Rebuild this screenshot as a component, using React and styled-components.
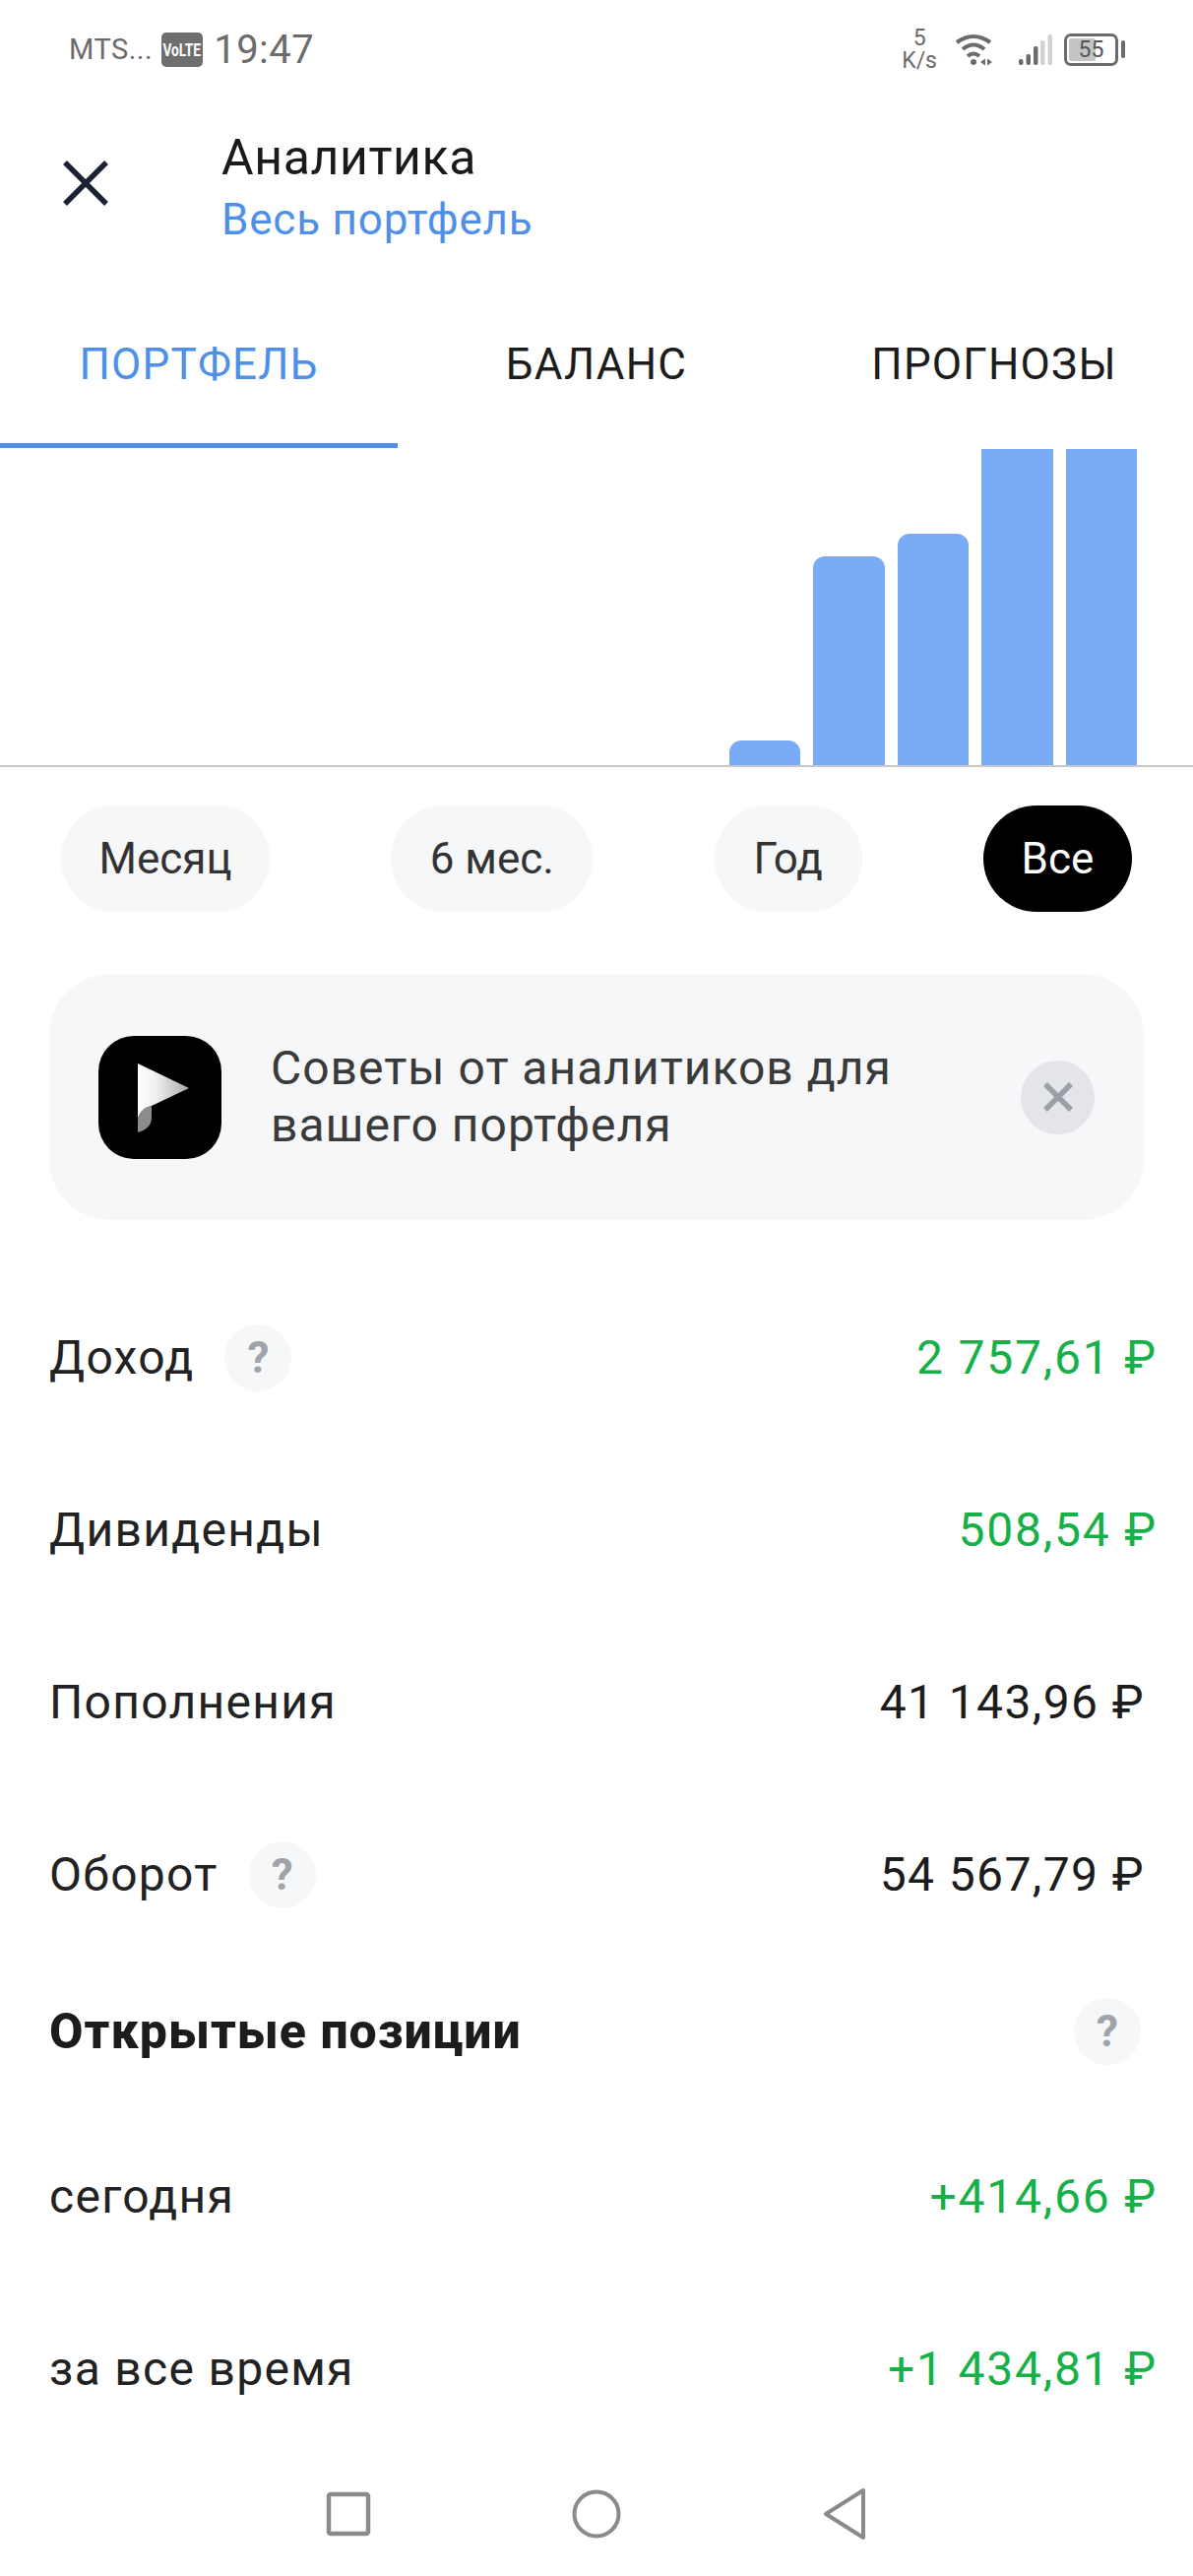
import React from 'react';
import styled, { createGlobalStyle } from 'styled-components';

const PERIODS = [
  { label: 'Месяц', width: 212 },
  { label: '6 мес.', width: 205 },
  { label: 'Год', width: 150 },
  { label: 'Все', width: 151, active: true },
];

const BARS = [25, 212, 235, 321, 321];

const App = () => (
  <Page>
    <GlobalStyle />
    <StatusBar>
      <StatusLeft>
        <Carrier>MTS...</Carrier>
        <Volte>
          <VolteText>VoLTE</VolteText>
        </Volte>
        <Clock>19:47</Clock>
      </StatusLeft>
      <StatusRight>
        <Speed>
          <span>5</span>
          <span>K/s</span>
        </Speed>
        <WifiIcon />
        <SignalIcon />
        <Battery>
          <BatteryBody>
            <BatteryFill />
            <BatteryText>55</BatteryText>
          </BatteryBody>
          <BatteryCap />
        </Battery>
      </StatusRight>
    </StatusBar>

    <Header>
      <CloseButton>
        <svg width="48" height="48" viewBox="0 0 48 48">
          <path d="M3 3 L45 45 M45 3 L3 45" stroke="#1b2233" strokeWidth="5.5" fill="none" />
        </svg>
      </CloseButton>
      <HeaderText>
        <Title>Аналитика</Title>
        <Subtitle>Весь портфель</Subtitle>
      </HeaderText>
    </Header>

    <Tabs>
      <Tab $active>ПОРТФЕЛЬ</Tab>
      <Tab>БАЛАНС</Tab>
      <Tab>ПРОГНОЗЫ</Tab>
    </Tabs>

    <Chart>
      {BARS.map((height, i) => (
        <Bar key={i} style={{ height }} $flat={height === 321} />
      ))}
    </Chart>

    <Periods>
      {PERIODS.map((p) => (
        <Period key={p.label} $active={p.active} style={{ width: p.width }}>
          {p.label}
        </Period>
      ))}
    </Periods>

    <Banner>
      <BannerIcon>
        <svg width="125" height="125" viewBox="0 0 125 125">
          <defs>
            <linearGradient id="flag" x1="0" x2="1" y1="0" y2="0">
              <stop offset="0" stopColor="#ffffff" />
              <stop offset="0.35" stopColor="#f0f0f0" />
              <stop offset="1" stopColor="#a9a9a9" />
            </linearGradient>
          </defs>
          <path d="M40 28 L92 53 L54 71 C45 73 40 80 40 86 Z" fill="url(#flag)" />
          <path d="M40 98 L40 86 C40 80 45 73 54 71 L54 83 C54 91 48 96 40 98 Z" fill="#8c8c8c" />
        </svg>
      </BannerIcon>
      <BannerText>Советы от аналитиков для вашего портфеля</BannerText>
      <BannerClose>
        <svg width="32" height="32" viewBox="0 0 32 32">
          <path d="M3 3 L29 29 M29 3 L3 29" stroke="#9aa0a8" strokeWidth="5.5" fill="none" />
        </svg>
      </BannerClose>
    </Banner>

    <Stats>
      <Row>
        <Label>
          Доход <Hint>?</Hint>
        </Label>
        <Value $positive>2 757,61 ₽</Value>
      </Row>
      <Row>
        <Label>Дивиденды</Label>
        <Value $positive>508,54 ₽</Value>
      </Row>
      <Row>
        <Label>Пополнения</Label>
        <Value>41 143,96 ₽</Value>
      </Row>
      <Row>
        <Label>
          Оборот <Hint>?</Hint>
        </Label>
        <Value>54 567,79 ₽</Value>
      </Row>
      <SectionRow>
        <SectionTitle>Открытые позиции</SectionTitle>
        <Hint>?</Hint>
      </SectionRow>
      <Row>
        <Label>сегодня</Label>
        <Value $positive>+414,66 ₽</Value>
      </Row>
      <Row>
        <Label>за все время</Label>
        <Value $positive>+1 434,81 ₽</Value>
      </Row>
    </Stats>

    <NavBar>
      <svg width="46" height="46" viewBox="0 0 46 46">
        <rect x="3" y="3" width="40" height="40" rx="2" fill="none" stroke="#8a8a8a" strokeWidth="4.5" />
      </svg>
      <svg width="50" height="50" viewBox="0 0 50 50">
        <circle cx="25" cy="25" r="22.5" fill="none" stroke="#8a8a8a" strokeWidth="4" />
      </svg>
      <svg width="46" height="54" viewBox="0 0 46 54">
        <path d="M42 3 L42 51 L4 27 Z" fill="none" stroke="#8a8a8a" strokeWidth="4" strokeLinejoin="round" />
      </svg>
    </NavBar>
  </Page>
);

const WifiIcon = () => (
  <Wifi width="40" height="33" viewBox="0 0 40 33">
    <path d="M2 9 Q19 -3 36 9" stroke="#6b6b6b" strokeWidth="4" fill="none" />
    <path d="M8 16 Q19 7 30 16" stroke="#6b6b6b" strokeWidth="4" fill="none" />
    <path d="M13 23 Q19 18 25 23" stroke="#6b6b6b" strokeWidth="4" fill="none" />
    <circle cx="19" cy="29" r="3" fill="#6b6b6b" />
    <path d="M26 29 L31 25.5 L31 32.5 Z M33 25.5 L38 29 L33 32.5 Z" fill="#6b6b6b" />
  </Wifi>
);

const SignalIcon = () => (
  <svg width="34" height="33" viewBox="0 0 34 33">
    <rect x="0" y="26" width="4.5" height="6" rx="2" fill="#6b6b6b" />
    <rect x="7.5" y="21" width="4.5" height="11" rx="2" fill="#6b6b6b" />
    <rect x="15" y="13" width="4.5" height="19" rx="2" fill="#6b6b6b" />
    <rect x="22" y="7" width="4.5" height="25" rx="2" fill="#d2d2d2" />
    <rect x="29.5" y="1" width="4.5" height="31" rx="2" fill="#d2d2d2" />
  </svg>
);

const GlobalStyle = createGlobalStyle`
  html, body {
    margin: 0;
    padding: 0;
    background: #fff;
  }
  body {
    font-family: Roboto, "Noto Sans", sans-serif;
  }
`;

const Page = styled.div`
  width: 1212px;
  height: 2616px;
  overflow: hidden;
  background: #fff;
  color: #1c1c1c;
`;

// STATUS BAR
const StatusBar = styled.div`
  height: 100px;
  padding: 0 69px 0 70px;
  display: flex;
  align-items: center;
  justify-content: space-between;
  color: #6b6b6b;
`;

const StatusLeft = styled.div`
  display: flex;
  align-items: center;
`;

const Carrier = styled.span`
  font-size: 29px;
  letter-spacing: 0.5px;
  margin-right: 9px;
`;

const Volte = styled.span`
  width: 42px;
  height: 35px;
  border-radius: 5px;
  background: #6e6e6e;
  display: flex;
  align-items: center;
  justify-content: center;
  margin-right: 11px;
`;

const VolteText = styled.span`
  color: #fff;
  font-size: 19px;
  font-weight: 700;
  transform: scaleX(0.72);
`;

const Clock = styled.span`
  font-size: 40px;
  letter-spacing: 0.5px;
`;

const StatusRight = styled.div`
  display: flex;
  align-items: center;
`;

const Speed = styled.div`
  display: flex;
  flex-direction: column;
  align-items: center;
  font-size: 23px;
  line-height: 23px;
  margin-right: 18px;
`;

const Wifi = styled.svg`
  margin-right: 25px;
`;

const Battery = styled.div`
  display: flex;
  align-items: center;
  gap: 3px;
  margin-left: 12px;
`;

const BatteryBody = styled.div`
  position: relative;
  width: 55px;
  height: 33px;
  box-sizing: border-box;
  border: 3px solid #6b6b6b;
  border-radius: 7px;
  display: flex;
  align-items: center;
  justify-content: center;
`;

const BatteryFill = styled.div`
  position: absolute;
  left: 2px;
  top: 2px;
  bottom: 2px;
  width: 55%;
  border-radius: 2px;
  background: #c4c4c4;
`;

const BatteryText = styled.span`
  position: relative;
  font-size: 23px;
  color: #555;
`;

const BatteryCap = styled.div`
  width: 4px;
  height: 18px;
  border-radius: 2px;
  background: #6b6b6b;
`;

// HEADER
const Header = styled.header`
  height: 190px;
  display: flex;
  padding-left: 63px;
`;

const CloseButton = styled.div`
  width: 162px;
  padding-top: 62px;
  line-height: 0;
`;

const HeaderText = styled.div`
  padding-top: 28px;
  display: flex;
  flex-direction: column;
`;

const Title = styled.h1`
  margin: 0;
  font-size: 50px;
  font-weight: 400;
  letter-spacing: 0.6px;
  line-height: 64px;
  color: #1a1a1a;
`;

const Subtitle = styled.span`
  font-size: 44px;
  letter-spacing: 0.8px;
  line-height: 62px;
  color: #4f8fe6;
`;

// TABS
const Tabs = styled.nav`
  display: grid;
  grid-template-columns: repeat(3, 404px);
  height: 165px;
`;

const Tab = styled.div`
  font-size: 44px;
  letter-spacing: 1.2px;
  display: flex;
  align-items: center;
  justify-content: center;
  box-sizing: border-box;
  color: ${({ $active }) => ($active ? '#4f8fe6' : '#1c1c1c')};
  border-bottom: 5px solid ${({ $active }) => ($active ? '#4f8fe6' : 'transparent')};
`;

// CHART
const Chart = styled.div`
  height: 324px;
  box-sizing: border-box;
  border-bottom: 2px solid #c9c9c9;
  padding-right: 57px;
  display: flex;
  align-items: flex-end;
  justify-content: flex-end;
  gap: 13px;
`;

const Bar = styled.div`
  width: 72.5px;
  background: #7aabf7;
  border-radius: ${({ $flat }) => ($flat ? '0' : '12px 12px 0 0')};
`;

// PERIODS
const Periods = styled.div`
  margin-top: 39px;
  padding: 0 62px;
  display: flex;
  justify-content: space-between;
`;

const Period = styled.button`
  height: 108px;
  border: 0;
  border-radius: 54px;
  padding: 0;
  font-family: inherit;
  font-size: 44px;
  background: ${({ $active }) => ($active ? '#000' : '#f6f7f8')};
  color: ${({ $active }) => ($active ? '#fff' : '#333')};
`;

// BANNER
const Banner = styled.div`
  margin: 63px 50px 0;
  height: 250px;
  border-radius: 62px;
  background: #f5f7f8;
  display: flex;
  align-items: center;
  padding: 0 50px;
`;

const BannerIcon = styled.div`
  width: 125px;
  height: 125px;
  flex: none;
  border-radius: 36px;
  background: #000;
  line-height: 0;
`;

const BannerText = styled.div`
  flex: 1;
  margin-left: 50px;
  max-width: 700px;
  font-size: 48px;
  letter-spacing: 1px;
  line-height: 58px;
  color: #3a3a3a;
`;

const BannerClose = styled.div`
  width: 75px;
  height: 75px;
  margin-left: auto;
  border-radius: 50%;
  background: #e3e5e8;
  display: flex;
  align-items: center;
  justify-content: center;
`;

// STATS
const Stats = styled.div`
  margin-top: 52px;
  padding: 0 36px 0 50px;
`;

const Row = styled.div`
  height: 175px;
  display: flex;
  align-items: center;
  justify-content: space-between;
`;

const Label = styled.div`
  font-size: 48px;
  letter-spacing: 1.3px;
  color: #222;
  display: flex;
  align-items: center;
  gap: 31px;
`;

const Value = styled.div`
  font-size: 48px;
  letter-spacing: ${({ $positive }) => ($positive ? '1.8px' : '1.4px')};
  color: ${({ $positive }) => ($positive ? '#16b048' : '#1c1c1c')};
  margin-right: ${({ $positive }) => ($positive ? '0' : '13px')};
`;

const Hint = styled.span`
  width: 68px;
  height: 68px;
  border-radius: 50%;
  background: #f6f7f8;
  color: #a0a4aa;
  font-size: 44px;
  font-weight: 700;
  letter-spacing: 0;
  display: flex;
  align-items: center;
  justify-content: center;
`;

const SectionRow = styled.div`
  height: 144px;
  margin-bottom: 8px;
  display: flex;
  align-items: center;
  justify-content: space-between;
  padding-right: 17px;
`;

const SectionTitle = styled.h2`
  margin: 0;
  font-size: 50px;
  font-weight: 800;
  letter-spacing: 1px;
  color: #1c1c1c;
`;

// NAV
const NavBar = styled.div`
  height: 124px;
  padding-bottom: 4px;
  box-sizing: border-box;
  display: grid;
  grid-template-columns: repeat(3, 252px);
  justify-content: center;
  align-items: center;
  justify-items: center;
`;

export default App;
